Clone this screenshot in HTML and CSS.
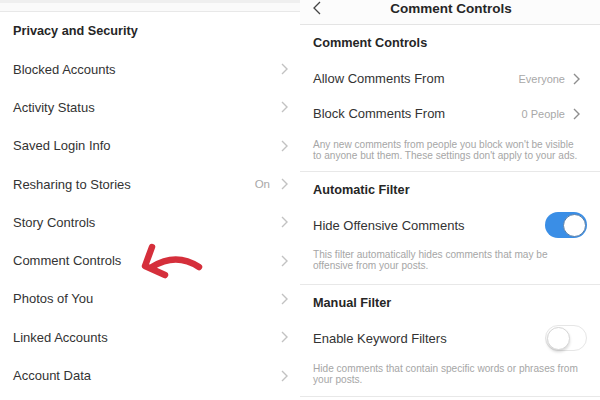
FILE: index.html
```
<!DOCTYPE html>
<html>
<head>
<meta charset="utf-8">
<link rel="stylesheet" href="styles.css">
</head>
<body>
<div class="page">
  <div class="left">
    <div class="topband"></div>
    <div class="lhead">Privacy and Security</div>
    <div class="lrow"><span class="label">Blocked Accounts</span><svg class="chev" viewBox="0 0 7 12"><path d="M1 1 L6 6 L1 11"/></svg></div>
    <div class="lrow"><span class="label">Activity Status</span><svg class="chev" viewBox="0 0 7 12"><path d="M1 1 L6 6 L1 11"/></svg></div>
    <div class="lrow"><span class="label">Saved Login Info</span><svg class="chev" viewBox="0 0 7 12"><path d="M1 1 L6 6 L1 11"/></svg></div>
    <div class="lrow"><span class="label">Resharing to Stories</span><span class="val">On</span><svg class="chev" viewBox="0 0 7 12"><path d="M1 1 L6 6 L1 11"/></svg></div>
    <div class="lrow"><span class="label">Story Controls</span><svg class="chev" viewBox="0 0 7 12"><path d="M1 1 L6 6 L1 11"/></svg></div>
    <div class="lrow"><span class="label">Comment Controls</span><svg class="chev" viewBox="0 0 7 12"><path d="M1 1 L6 6 L1 11"/></svg></div>
    <div class="lrow"><span class="label">Photos of You</span><svg class="chev" viewBox="0 0 7 12"><path d="M1 1 L6 6 L1 11"/></svg></div>
    <div class="lrow"><span class="label">Linked Accounts</span><svg class="chev" viewBox="0 0 7 12"><path d="M1 1 L6 6 L1 11"/></svg></div>
    <div class="lrow"><span class="label">Account Data</span><svg class="chev" viewBox="0 0 7 12"><path d="M1 1 L6 6 L1 11"/></svg></div>
    <svg class="arrow" viewBox="0 0 90 60"><path d="M22 32 Q46 17 69 32"/><path d="M22 12 L15 31 L35 40"/></svg>
  </div>
  <div class="right">
    <div class="rheader">
      <svg class="back" viewBox="0 0 8 14"><path d="M7 1 L1 7 L7 13"/></svg>
      <span class="title">Comment Controls</span>
    </div>
    <div class="sec sec1">Comment Controls</div>
    <div class="rrow"><span class="label">Allow Comments From</span><span class="rval">Everyone</span><svg class="rchev" viewBox="0 0 7 12"><path d="M1 1 L6 6 L1 11"/></svg></div>
    <div class="rrow"><span class="label">Block Comments From</span><span class="rval">0 People</span><svg class="rchev" viewBox="0 0 7 12"><path d="M1 1 L6 6 L1 11"/></svg></div>
    <div class="note note1">Any new comments from people you block won't be visible to anyone but them. These settings don't apply to your ads.</div>
    <div class="sec">Automatic Filter</div>
    <div class="trow"><span class="label">Hide Offensive Comments</span><span class="toggle on"><span class="knob"></span></span></div>
    <div class="note note2">This filter automatically hides comments that may be offensive from your posts.</div>
    <div class="sec">Manual Filter</div>
    <div class="trow"><span class="label">Enable Keyword Filters</span><span class="toggle off"><span class="knob"></span></span></div>
    <div class="note note3">Hide comments that contain specific words or phrases from your posts.</div>
  </div>
</div>
</body>
</html>
```
FILE: styles.css
```
* { box-sizing: border-box; }
html, body { margin: 0; padding: 0; background: #fff; }
body { font-family: "Liberation Sans", Arial, sans-serif; color: #333; }
.page { display: flex; width: 600px; height: 400px; overflow: hidden; }

.left { position: relative; width: 300px; display: flex; flex-direction: column; }
.topband { height: 12px; background: #fafafa; border-top: 3px solid #efefef; border-bottom: 1px solid #e8e8e8; }
.lhead { height: 38px; display: flex; align-items: center; padding-left: 13px; font-weight: 700; font-size: 12.7px; color: #262626; }
.lrow { height: 38.3px; display: flex; align-items: center; padding: 0 12px 0 13px; font-size: 13px; color: #333; }
.lrow .label { flex: 1; }
.val { font-size: 11.5px; color: #a8a8a8; margin-right: 11px; }
.chev { width: 7px; height: 12px; fill: none; stroke: #c2c2c2; stroke-width: 1.4; }

.arrow { position: absolute; left: 130px; top: 235px; width: 90px; height: 60px; fill: none; stroke: #d52f3b; stroke-width: 6.5; stroke-linecap: round; stroke-linejoin: round; }

.right { width: 300px; display: flex; flex-direction: column; }
.rheader { position: relative; height: 25px; border-bottom: 1px solid #e4e4e4; background: #fcfcfc; display: flex; justify-content: center; align-items: flex-start; }
.back { position: absolute; left: 13px; top: 1px; width: 8px; height: 14px; fill: none; stroke: #444; stroke-width: 1.3; }
.title { font-weight: 700; font-size: 13.5px; color: #262626; line-height: 17px; padding-left: 2px; }

.sec { height: 36px; display: flex; align-items: center; padding-left: 13px; font-weight: 700; font-size: 12.7px; color: #262626; }
.rrow { height: 35px; display: flex; align-items: center; padding: 0 20px 0 13px; font-size: 13px; }
.rrow .label { flex: 1; }
.rval { font-size: 11px; color: #a8a8a8; margin-right: 8px; }
.rchev { width: 7px; height: 12px; fill: none; stroke: #8e8e8e; stroke-width: 1.4; }

.trow { height: 34px; display: flex; align-items: center; padding: 0 13px 0 13px; font-size: 13px; }
.trow .label { flex: 1; }

.note { padding: 0 20px 0 13px; font-size: 10.1px; line-height: 11px; color: #a6a6a6; border-bottom: 1px solid #e8e8e8; }
.note1 { padding-top: 8px; padding-bottom: 10px; }
.note2 { padding-top: 7px; padding-bottom: 13px; }
.note3 { padding-top: 8px; padding-bottom: 11px; }

.toggle { position: relative; width: 42px; height: 26px; border-radius: 13px; display: block; }
.toggle.on { background: #3a8ee6; }
.toggle.off { background: #fff; border: 1px solid #e6e6e6; }
.knob { position: absolute; top: 1.5px; width: 23px; height: 23px; border-radius: 50%; background: #fff; }
.toggle.on .knob { right: 1.5px; border: 1px solid #5a7fa8; }
.toggle.off .knob { left: 0.5px; top: 0.5px; border: 1px solid #d6d6d6; box-shadow: 0 2px 3px rgba(0,0,0,0.15); }
```
